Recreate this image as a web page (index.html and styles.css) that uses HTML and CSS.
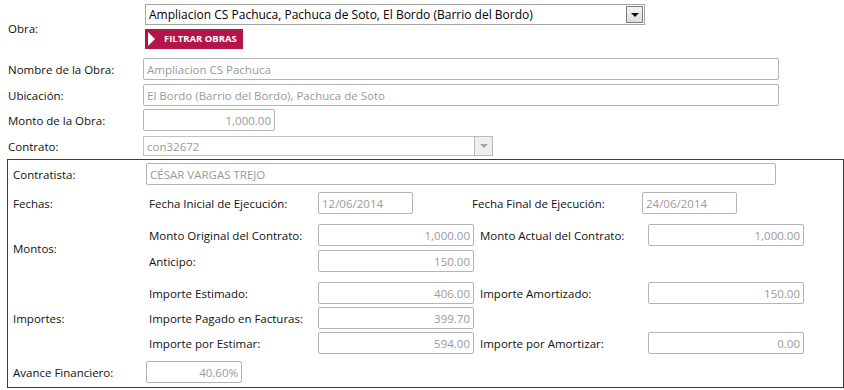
FILE: index.html
```
<!DOCTYPE html>
<html lang="es">
    <head>
        <meta charset="UTF-8" />
        <meta name="viewport" content="width=device-width, initial-scale=1.0" />
        <title>Obra</title>
        <link rel="stylesheet" href="styles.css">
    </head>
    <body>
        <!-- datos de la obra -->
        <div class="obra">
            <div class="row row-obra">
                <label class="lbl">Obra:</label>
                <div class="obra-ctrl">
                    <div class="combo">
                        <span class="combo-txt">Ampliacion CS Pachuca, Pachuca de Soto, El Bordo (Barrio del Bordo)</span>
                        <span class="combo-btn"><i class="tri"></i></span>
                    </div>
                    <a href="#" class="btn-filtrar">FILTRAR OBRAS</a>
                </div>
            </div>
            <div class="row r1">
                <label class="lbl">Nombre de la Obra:</label>
                <input class="fld w-long" type="text" value="Ampliacion CS Pachuca" readonly>
            </div>
            <div class="row r2">
                <label class="lbl">Ubicación:</label>
                <input class="fld w-long" type="text" value="El Bordo (Barrio del Bordo), Pachuca de Soto" readonly>
            </div>
            <div class="row r3">
                <label class="lbl">Monto de la Obra:</label>
                <input class="fld num w-monto" type="text" value="1,000.00" readonly>
            </div>
            <div class="row r4">
                <label class="lbl">Contrato:</label>
                <div class="combo combo-off">
                    <span class="combo-txt">con32672</span>
                    <span class="combo-btn"><i class="tri"></i></span>
                </div>
            </div>
        </div>

        <!-- datos del contrato -->
        <div class="contrato">
            <div class="row c-contratista">
                <label class="lbl">Contratista:</label>
                <input class="fld w-contratista" type="text" value="CÉSAR VARGAS TREJO" readonly>
            </div>

            <div class="row c-fechas">
                <label class="lbl">Fechas:</label>
                <span class="sub">Fecha Inicial de Ejecución:</span>
                <input class="fld w-fecha" type="text" value="12/06/2014" readonly>
                <span class="sub sub-fin">Fecha Final de Ejecución:</span>
                <input class="fld w-fecha" type="text" value="24/06/2014" readonly>
            </div>

            <div class="grupo c-montos">
                <label class="lbl span2">Montos:</label>
                <span class="sub">Monto Original del Contrato:</span>
                <input class="fld num" type="text" value="1,000.00" readonly>
                <span class="sub sub-der">Monto Actual del Contrato:</span>
                <input class="fld num" type="text" value="1,000.00" readonly>
                <span class="sub">Anticipo:</span>
                <input class="fld num" type="text" value="150.00" readonly>
                <span></span><span></span>
            </div>

            <div class="grupo c-importes">
                <label class="lbl span3">Importes:</label>
                <span class="sub">Importe Estimado:</span>
                <input class="fld num" type="text" value="406.00" readonly>
                <span class="sub sub-der">Importe Amortizado:</span>
                <input class="fld num" type="text" value="150.00" readonly>
                <span class="sub">Importe Pagado en Facturas:</span>
                <input class="fld num" type="text" value="399.70" readonly>
                <span></span><span></span>
                <span class="sub">Importe por Estimar:</span>
                <input class="fld num" type="text" value="594.00" readonly>
                <span class="sub sub-der">Importe por Amortizar:</span>
                <input class="fld num" type="text" value="0.00" readonly>
            </div>

            <div class="row c-avance">
                <label class="lbl">Avance Financiero:</label>
                <input class="fld num w-avance" type="text" value="40.60%" readonly>
            </div>
        </div>
    </body>
</html>
```
FILE: styles.css
```
html,
body {
    margin: 0px;
    padding: 0px;
    width: 100%;
    height: 100%;
    background: #fff;
}

body {
    font-family: "Open Sans", "Noto Sans", sans-serif;
    font-size: 11.5px;
    color: #111;
}

/* filas */
.row {
    display: flex;
    align-items: center;
}

.lbl {
    flex-shrink: 0;
}

/* campos de texto */
.fld {
    box-sizing: border-box;
    height: 22px;
    margin: 0;
    padding: 0 3px;
    border: 1px solid #b4b4b4;
    border-radius: 2px;
    background: #fff;
    font-family: inherit;
    font-size: 11.5px;
    color: #9a9a9a;
    outline: none;
}

.num {
    text-align: right;
}

/* parte de arriba */
.obra {
    padding: 4px 0 0 8px;
}

.obra .lbl {
    width: 135px;
}

.row-obra .lbl {
    padding-top: 4px;
}

.obra-ctrl {
    display: flex;
    flex-direction: column;
    gap: 4px;
    padding-left: 2px;
}

.r1 {
    margin-top: 9px;
}

.r2 {
    margin-top: 4px;
}

.r3 {
    margin-top: 3px;
}

.r4 {
    margin-top: 5px;
}

.w-long {
    width: 636px;
}

.w-monto {
    width: 132px;
}

/* combo */
.combo {
    box-sizing: border-box;
    display: flex;
    align-items: center;
    justify-content: space-between;
    width: 500px;
    height: 21px;
    padding: 0 1px 0 3px;
    border: 1px solid #a5a5a5;
    background: #fff;
    font-size: 12px;
    color: #000;
}

.combo-btn {
    box-sizing: border-box;
    display: flex;
    align-items: center;
    justify-content: center;
    width: 17px;
    height: 17px;
    border: 1px solid #7d7d7d;
    background: linear-gradient(#f4f4f4, #dcdcdc);
}

.tri {
    width: 0;
    height: 0;
    border-left: 4px solid transparent;
    border-right: 4px solid transparent;
    border-top: 4px solid #111;
}

.combo-off {
    width: 350px;
    height: 20px;
    padding-right: 0;
    border-color: #c2c2c2;
    font-size: 11.5px;
    color: #9a9a9a;
}

.combo-off .combo-btn {
    width: 19px;
    height: 20px;
    margin-right: -1px;
    border: 1px solid #b9b9b9;
    background: #efefef;
}

.combo-off .tri {
    border-top-color: #a5a5a5;
}

/* boton filtrar */
.btn-filtrar {
    position: relative;
    box-sizing: border-box;
    display: block;
    width: 98px;
    height: 20px;
    padding-left: 19px;
    background: #b3154b;
    color: #fff;
    font-size: 9.5px;
    font-weight: bold;
    line-height: 20px;
    text-decoration: none;
}

/* flecha blanca del boton */
.btn-filtrar::before {
    content: "";
    position: absolute;
    left: 3px;
    top: 3px;
    border-top: 7px solid transparent;
    border-bottom: 7px solid transparent;
    border-left: 7px solid #fff;
}

/* caja del contrato */
.contrato {
    box-sizing: border-box;
    width: 837px;
    height: 229px;
    margin: 3px 0 0 7px;
    padding: 3px 0 0 5px;
    border: 1px solid #3a3a3a;
}

.contrato .lbl {
    width: 133px;
}

.sub {
    padding-left: 3px;
}

.w-contratista {
    width: 630px;
}

.c-fechas {
    margin-top: 7px;
}

.c-fechas .sub {
    width: 169px;
    flex-shrink: 0;
}

.c-fechas .sub-fin {
    width: 170px;
    margin-left: 56px;
}

.w-fecha {
    width: 95px;
}

/* grupos de dos o tres filas */
.grupo {
    display: grid;
    grid-template-columns: 133px 172px 156px 174px 156px;
    grid-auto-rows: 22px;
    row-gap: 4px;
    align-items: center;
}

.c-montos {
    margin-top: 10px;
}

.c-importes {
    margin-top: 10px;
    row-gap: 3px;
}

.span2 {
    grid-row: span 2;
}

.span3 {
    grid-row: span 3;
}

.sub-der {
    padding-left: 6px;
}

.c-avance {
    margin-top: 7px;
}

.w-avance {
    width: 96px;
}
```
